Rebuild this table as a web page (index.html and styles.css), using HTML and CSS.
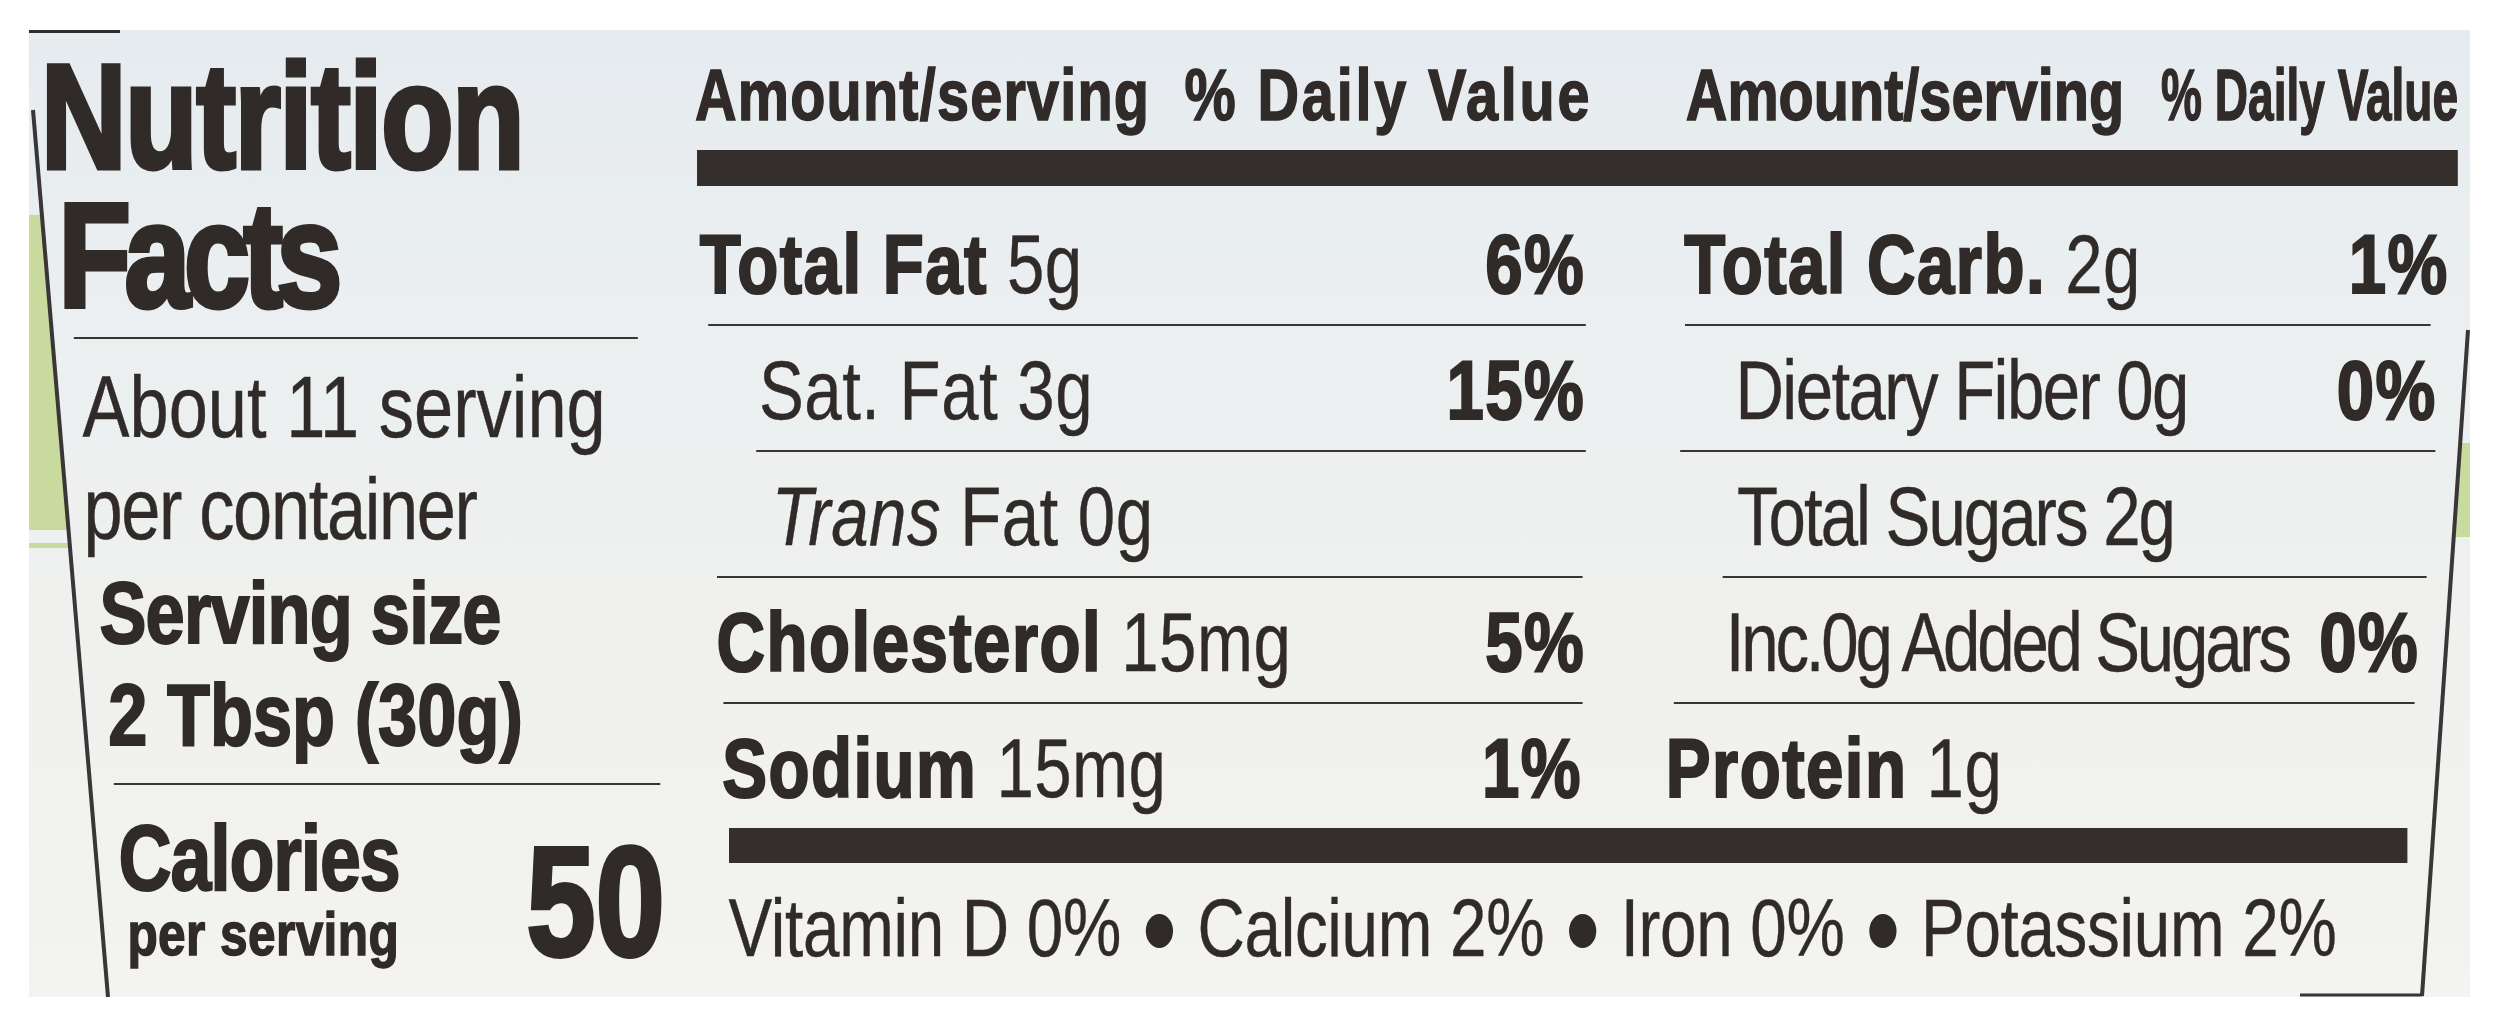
FILE: index.html
```html
<!DOCTYPE html>
<html lang="en">
<head>
<meta charset="utf-8">
<title>Nutrition Facts</title>
<link rel="stylesheet" href="styles.css">
</head>
<body>
<div class="photo">
  <svg class="frame" width="2441" height="967" viewBox="0 0 2441 967">
    <polygon class="green" points="0,185 13,185 40,500 0,500"/>
    <rect class="green" x="0" y="513" width="41" height="5"/>
    <polygon class="green" points="2431,413 2441,413 2441,507 2425,507"/>
    <rect class="ink" x="0" y="0" width="91" height="3"/>
    <line class="edge" x1="4" y1="80" x2="79" y2="967"/>
    <line class="edge" x1="2439" y1="300" x2="2393" y2="966"/>
    <line class="edge thin" x1="2271" y1="965" x2="2393" y2="965"/>
  </svg>
  <div class="label">
    <section class="intro">
      <div class="title t1">Nutrition</div>
      <div class="title t2">Facts</div>
      <div class="rule rule1"></div>
      <div class="txt about">About 11 serving</div>
      <div class="txt per-container">per container</div>
      <div class="txt strong serving">Serving size</div>
      <div class="txt strong tbsp">2 Tbsp (30g)</div>
      <div class="rule rule2"></div>
      <div class="cal-row">
        <div class="cal-label">
          <div class="calories">Calories</div>
          <div class="perserv">per serving</div>
        </div>
        <div class="cal-num">50</div>
      </div>
    </section>
    <section class="facts">
      <div class="cols">
        <div class="hd hd-left"><span>Amount/serving</span><span class="dv">% Daily Value</span></div>
        <div class="hd hd-right"><span>Amount/serving</span><span class="squeeze">% Daily Value</span></div>
      </div>
      <div class="bar bar1"></div>
      <div class="cols table">
        <div class="col">
          <div class="row l1"><span class="name"><b>Total Fat</b> 5g</span><b>6%</b></div>
          <div class="sep ls1"></div>
          <div class="row l2"><span class="name">Sat. Fat 3g</span><b>15%</b></div>
          <div class="sep ls2"></div>
          <div class="row l3"><span class="name"><i>Trans</i> Fat 0g</span></div>
          <div class="sep ls3"></div>
          <div class="row l4"><span class="name"><b>Cholesterol</b> 15mg</span><b>5%</b></div>
          <div class="sep ls4"></div>
          <div class="row l5"><span class="name"><b>Sodium</b> 15mg</span><b>1%</b></div>
        </div>
        <div class="col">
          <div class="row r1"><span class="name"><b>Total Carb.</b> 2g</span><b>1%</b></div>
          <div class="sep rs1"></div>
          <div class="row r2"><span class="name">Dietary Fiber 0g</span><b>0%</b></div>
          <div class="sep rs2"></div>
          <div class="row r3"><span class="name">Total Sugars 2g</span></div>
          <div class="sep rs3"></div>
          <div class="row r4"><span class="name">Inc.0g Added Sugars</span><b>0%</b></div>
          <div class="sep rs4"></div>
          <div class="row r5"><span class="name"><b>Protein</b> 1g</span></div>
        </div>
      </div>
      <div class="bar bar2"></div>
      <div class="vitamins">Vitamin D 0% <span class="dot">•</span> Calcium 2% <span class="dot">•</span> Iron 0% <span class="dot">•</span> Potassium 2%</div>
    </section>
  </div>
</div>
</body>
</html>
```

FILE: styles.css
```css
html, body {
  margin: 0;
  padding: 0;
  background: #ffffff;
}
body {
  width: 2500px;
  height: 1027px;
  overflow: hidden;
}
.photo {
  position: relative;
  margin: 30px 0 0 29px;
  width: 2441px;
  height: 967px;
  overflow: hidden;
  background: linear-gradient(to bottom, #e6ebef 0%, #ebeff1 30%, #f0f1ee 65%, #f3f3ef 100%);
  font-family: "Liberation Sans", Arial, sans-serif;
  color: #302b28;
}
.frame {
  position: absolute;
  left: 0;
  top: 0;
  pointer-events: none;
}
.frame .green { fill: #c8da9e; }
.frame .ink { fill: #2f2b2b; }
.frame .edge { stroke: #3a3537; stroke-width: 4; }
.frame .edge.thin { stroke-width: 3; }

/* The label is laid out in an unscaled space and compressed
   horizontally to mimic the condensed typeface of the print. */
.label {
  display: flex;
  width: 3051px;
  padding-left: 15px;
  box-sizing: border-box;
  transform-origin: 0 0;
  transform: scaleX(0.8);
}

/* ---------- left intro panel ---------- */
.intro {
  flex: none;
  width: 785px;
  padding-top: 17px;
}
.title {
  font-size: 148px;
  line-height: 139px;
  height: 139px;
  font-weight: 700;
  letter-spacing: -1.5px;
  -webkit-text-stroke: 5px #302b28;
  white-space: nowrap;
}
.t2 { margin-left: 22px; letter-spacing: -8px; }
.rule {
  height: 2px;
  background: #3a3532;
}
.rule1 { margin: 12px 0 0 41px; width: 705px; }
.rule2 { margin: 18px 0 0 91px; width: 683px; }
.txt {
  font-size: 88px;
  white-space: nowrap;
  -webkit-text-stroke: 0.4px #302b28;
}
.about { margin: 18px 0 0 52px; line-height: 100px; height: 100px; letter-spacing: 0; }
.per-container { margin-left: 53px; line-height: 104px; height: 104px; letter-spacing: -1.7px; }
.strong { font-weight: 700; -webkit-text-stroke: 2px #302b28; }
.serving { margin-left: 73px; line-height: 104px; height: 104px; letter-spacing: -1px; }
.tbsp { margin-left: 84px; line-height: 100px; height: 100px; letter-spacing: 0; }
.cal-row {
  margin: 22px 0 0 97px;
  width: 683px;
  display: flex;
  justify-content: space-between;
  align-items: last baseline;
}
.calories {
  font-size: 92px;
  line-height: 102px;
  font-weight: 700;
  letter-spacing: -1.5px;
  -webkit-text-stroke: 2px #302b28;
}
.perserv {
  margin-left: 11px;
  font-size: 62px;
  line-height: 50px;
  font-weight: 700;
  letter-spacing: 0.5px;
  -webkit-text-stroke: 1.5px #302b28;
}
.cal-num {
  font-size: 156px;
  line-height: 156px;
  font-weight: 700;
  -webkit-text-stroke: 4px #302b28;
}

/* ---------- facts panel ---------- */
.facts {
  flex: none;
  margin-left: 32.5px;
  width: 2206.25px;
  padding-top: 25px;
}
.cols {
  display: grid;
  grid-template-columns: 1118.75px 993.75px;
  column-gap: 93.75px;
}
.hd {
  display: flex;
  justify-content: space-between;
  font-size: 72px;
  line-height: 80px;
  height: 80px;
  font-weight: 700;
  white-space: nowrap;
  -webkit-text-stroke: 1.5px #302b28;
}
.hd-left { letter-spacing: 1.5px; }
.hd-left .dv { letter-spacing: 3.5px; margin-right: -3px; }
.hd-right { padding-left: 26px; margin-right: -2px; }
.hd span { flex: none; }
.squeeze {
  display: inline-block;
  width: 376px;
  transform: scaleX(0.8);
  transform-origin: left center;
}
.bar {
  background: #342f2c;
}
.bar1 { margin: 15px 2.5px 0 2.5px; height: 36px; }
.table { margin-top: 14px; }
.row {
  display: flex;
  justify-content: space-between;
  align-items: baseline;
  padding-top: 14px;
  padding-bottom: 10px;
  font-size: 84px;
  line-height: 100px;
  height: 100px;
  white-space: nowrap;
  letter-spacing: 0.6px;
  -webkit-text-stroke: 0.4px #302b28;
}
.name { flex: 1 1 0; min-width: 0; }
.row b { font-weight: 700; letter-spacing: 1.8px; -webkit-text-stroke: 2.2px #302b28; }
.row i { font-style: italic; }
.sep {
  height: 2px;
  background: #3a3532;
}
.l1 { padding-left: 6px; padding-right: 6px; }
.l2 { padding-left: 80px; padding-right: 6px; }
.l3 { padding-left: 96px; }
.l4 { padding-left: 27px; padding-right: 6px; }
.l5 { padding-left: 34px; padding-right: 10px; }
.ls1 { margin: 0 5px 0 16px; }
.ls2 { margin: 0 5px 0 76px; }
.ls3 { margin: 0 9px 0 27px; }
.ls4 { margin: 0 9px 0 35px; }
.r1 { padding-left: 24px; padding-right: 14px; }
.r2 { padding-left: 88px; padding-right: 29px; }
.r2 .name { letter-spacing: -2px; }
.r3 { padding-left: 90px; }
.r3 .name { letter-spacing: -2.5px; }
.r4 { padding-left: 76px; padding-right: 51px; }
.r4 .name { letter-spacing: -4px; }
.r5 { padding-left: 1px; }
.rs1 { margin: 0 37px 0 25px; }
.rs2 { margin: 0 31px 0 19px; }
.rs3 { margin: 0 42px 0 72px; }
.rs4 { margin: 0 57px 0 11px; }
.bar2 { margin: 0 66px 0 42px; height: 35px; }
.vitamins {
  margin: 20px 0 0 42px;
  font-size: 82px;
  line-height: 90px;
  height: 90px;
  white-space: nowrap;
  letter-spacing: -0.4px;
  -webkit-text-stroke: 0.4px #302b28;
}
.dot {
  display: inline-block;
  font-size: 112px;
  line-height: 0;
  vertical-align: -12px;
  margin: 0 6px;
  font-weight: 700;
  -webkit-text-stroke: 2px #302b28;
}
```
